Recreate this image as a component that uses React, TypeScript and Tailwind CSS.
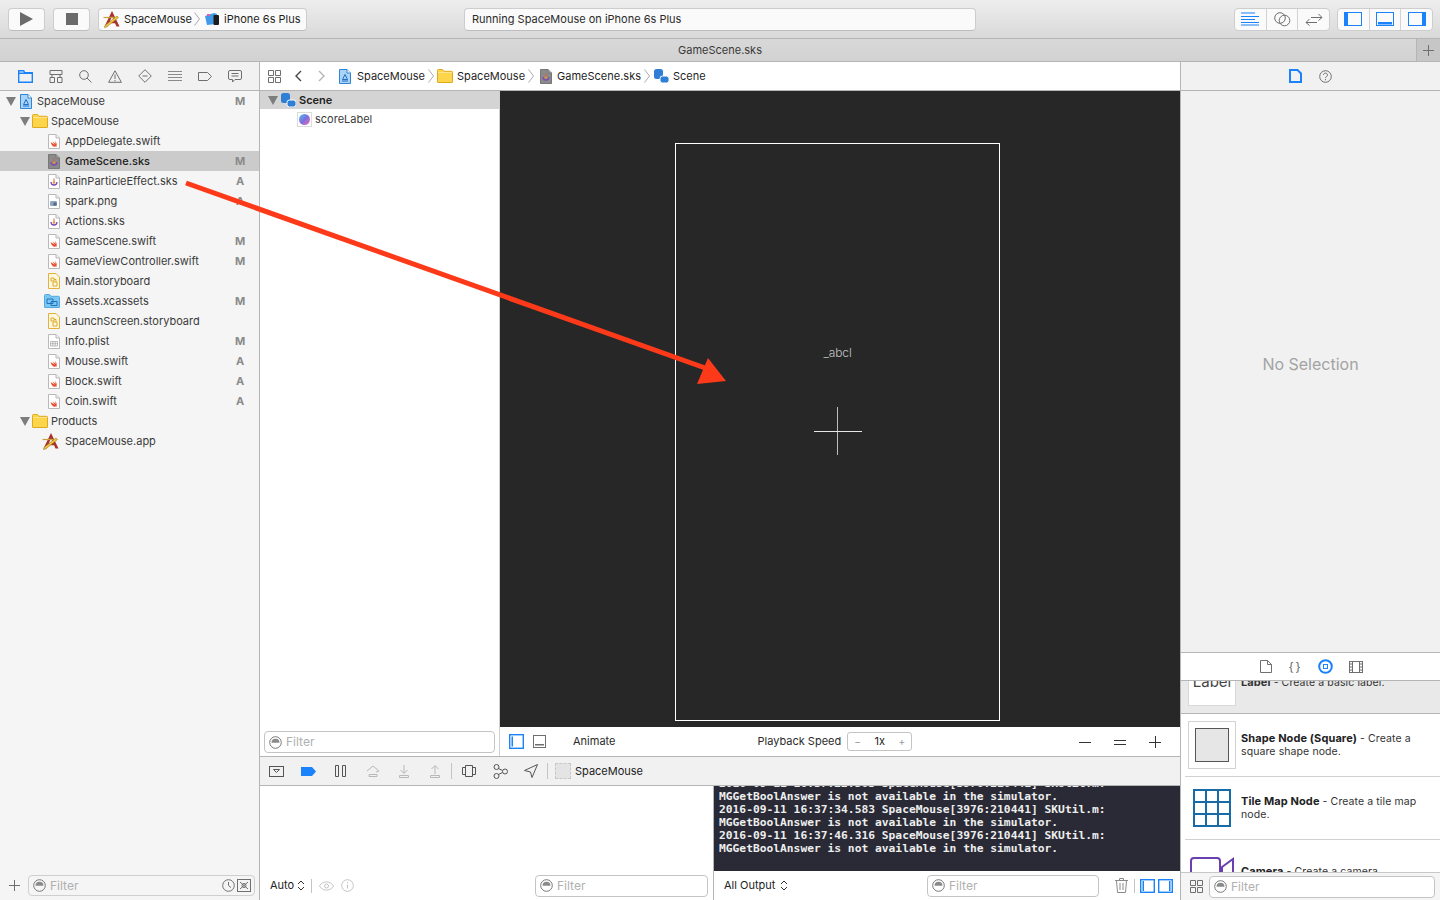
import React from "react";

const BLUE = "#1a82fb";
const GRAY = "#6f6f6f";

// -- small icon drawings --
function Disclosure() {
    return <svg width="10" height="9" viewBox="0 0 10 9" className="shrink-0"><path d="M0 0h10L5 9z" fill="#7d7d7d" /></svg>;
}
function Paper({ children, dark }: { children?: React.ReactNode; dark?: boolean }) {
    return (
        <svg width="12" height="15" viewBox="0 0 12 15" className="shrink-0">
            <path d="M.5.5h7.5l3.500 3.500v10.500h-11z" fill={dark ? "#8a8a8a" : "#fff"} stroke={dark ? "#777" : "#b9b9b9"} />
            <path d="M8 .5v3.500h3.500" fill={dark ? "#aaa" : "#eee"} stroke={dark ? "#777" : "#b9b9b9"} />
            {children}
        </svg>
    );
}
function SwiftFile() {
    return <Paper><path d="M2.500 8c2 1.500 4 2.500 4.500 2.700-1-1-2-2.400-2.500-3.200 1.500 1.200 3 2.200 3.500 2.300-.5-1-1-2-1.200-2.800 1.500 1.200 2.500 3 1.700 4.800.4.500.5.900.5 1.200-.5-.6-1-.6-1.600-.4-1.800.5-4-1-4.900-4.600z" fill="#ea4b2e" /></Paper>;
}
function SksFile({ dark }: { dark?: boolean }) {
    return (
        <Paper dark={dark}>
            <path d="M3 8a3 3 0 0 0 6 0" fill="none" stroke="#7b4cb5" strokeWidth="1.300" />
            <circle cx="6" cy="8.500" r="1.200" fill="#e8902c" />
            <path d="M6 4.500v3" stroke="#d9603c" strokeWidth="1" />
        </Paper>
    );
}
function PngFile() {
    return <Paper><rect x="2" y="7" width="7" height="5" rx="1" fill="#8fa6c4" /><circle cx="7" cy="10" r="1.800" fill="#5d6b80" /></Paper>;
}
function PlistFile() {
    return <Paper><path d="M2.500 7.500h7v4.500h-7zM2.500 9.700h7M4.800 7.500v4.500M7.200 7.500v4.500" fill="none" stroke="#a9a9a9" strokeWidth=".8" /></Paper>;
}
function StoryboardFile() {
    return (
        <svg width="12" height="16" viewBox="0 0 12 16" className="shrink-0">
            <path d="M.5.500h7.500l3.500 3.500v11.500h-11z" fill="#fff8e0" stroke="#e3b23a" />
            <path d="M3 5h3v3h-3zM5 9h4v4h-4z" fill="none" stroke="#e0a92a" />
            <path d="M6 6.500h2v2.500" fill="none" stroke="#e0a92a" />
        </svg>
    );
}
function Folder({ w = 16, h = 14 }: { w?: number; h?: number }) {
    return (
        <svg width={w} height={h} viewBox="0 0 16 14" className="shrink-0">
            <path d="M.5 13V1.500a1 1 0 0 1 1-1h4l1.500 1.800h7.500a1 1 0 0 1 1 1V13a.5.500 0 0 1-.5.500h-14a.5.500 0 0 1-.5-.5z" fill="#fdd54a" stroke="#dfa91f" />
            <path d="M1 3.500h14" stroke="#fbe38f" />
        </svg>
    );
}
function AssetsFolder() {
    return (
        <svg width="16" height="14" viewBox="0 0 16 14" className="shrink-0">
            <path d="M.5 13V1.500a1 1 0 0 1 1-1h4l1.500 1.800h7.500a1 1 0 0 1 1 1V13a.5.500 0 0 1-.5.500h-14a.5.500 0 0 1-.5-.5z" fill="#7cc7f2" stroke="#55a8dc" />
            <path d="M3 5h6v4.500h-6zM7 7.500h6v4h-6z" fill="none" stroke="#1f73bd" />
        </svg>
    );
}
function ProjectFile({ size = 12 }: { size?: number }) {
    return (
        <svg width={size} height={size * 15 / 12} viewBox="0 0 12 15" className="shrink-0">
            <path d="M.5.500h7.500l3.500 3.500v10.500h-11z" fill="#a9d3f7" stroke="#2f86d8" />
            <path d="M8 .5v3.500h3.500" fill="#fff" stroke="#2f86d8" />
            <path d="M6 5.500l2.500 5h-5zM3 12h6" fill="none" stroke="#1f6fc4" />
        </svg>
    );
}
function AppIcon({ size = 18 }: { size?: number }) {
    return (
        <svg width={size} height={size} viewBox="0 0 18 18" className="shrink-0">
            <path d="M9 1l7.500 15.500h-3l-1.400-3.200h-6.200l-1.400 3.200h-3z" fill="#a8322b" />
            <path d="M9 6.500l2 4.500h-4z" fill="#f4f4f4" />
            <path d="M2 15.500l12-9.500 1.500 1.500-12 9.500-2 .5z" fill="#f2c744" stroke="#9b7b1f" strokeWidth=".6" />
            <path d="M.5 7.500h11" stroke="#c9a13a" strokeWidth="1.200" />
        </svg>
    );
}
function PhoneSim() {
    return (
        <svg width="16" height="14" viewBox="0 0 16 14" className="shrink-0">
            <path d="M1 4l9-3 3 1-1 10-9 1z" fill="#3f9be8" />
            <path d="M3 2h3v2h-3z" fill="#d864a8" />
            <rect x="9.500" y="3" width="5.500" height="10" rx="1" fill="#1c1c1c" />
        </svg>
    );
}
function FilterGlyph() {
    return (
        <svg width="13" height="13" viewBox="0 0 13 13" className="shrink-0">
            <circle cx="6.500" cy="6.500" r="5.800" fill="none" stroke="#777" />
            <path d="M2.500 6.800a4 4 0 0 1 8 0z" fill="#8a8a8a" />
        </svg>
    );
}
function FilterBox({ className, right, bg }: { className: string; right?: React.ReactNode; bg?: string }) {
    return (
        <div className={`flex h-[22px] items-center gap-1 rounded-[4px] border border-[#c4c4c4] pl-[4px] pr-[3px] ${bg ?? "bg-white"} ${className}`}>
            <FilterGlyph />
            <span className="flex-1 text-[12px] text-[#b0b0b0]">Filter</span>
            {right}
        </div>
    );
}
function Chevron({ h = 14 }: { h?: number }) {
    return <svg width="6" height={h} viewBox="0 0 6 14" className="shrink-0"><path d="M.5.500l5 6.500-5 6.500" fill="none" stroke="#aaa" /></svg>;
}
function Ico({ w = 16, h = 16, children, className }: { w?: number; h?: number; children: React.ReactNode; className?: string }) {
    return <svg width={w} height={h} viewBox={`0 0 ${w} ${h}`} fill="none" stroke={GRAY} className={`shrink-0 ${className ?? ""}`}>{children}</svg>;
}

// -- toolbar --
function ToolBtn({ children, className }: { children: React.ReactNode; className: string }) {
    return <div className={`flex h-[23px] items-center justify-center rounded-[4px] border border-[#cdcdcd] border-b-[#bdbdbd] bg-[#fafafa] ${className}`}>{children}</div>;
}
function Toolbar() {
    return (
        <div className="flex h-[39px] shrink-0 items-center border-b border-[#b5b5b5] bg-gradient-to-b from-[#eeeeee] to-[#d9d9d9] pl-[8px] pr-[7px]">
            <ToolBtn className="w-[37px]">
                <svg width="13" height="14" viewBox="0 0 13 14"><path d="M0 0l13 7-13 7z" fill="#6b6b6b" /></svg>
            </ToolBtn>
            <ToolBtn className="ml-[8px] w-[37px]"><div className="h-[12px] w-[12px] bg-[#6b6b6b]" /></ToolBtn>
            <ToolBtn className="ml-[8px] w-[209px] justify-start whitespace-nowrap pl-[4px] text-[#1f1f1f]">
                <AppIcon />
                <span className="ml-[3px] pt-px text-[11px]">SpaceMouse</span>
                <span className="ml-[2px]"><Chevron /></span>
                <span className="ml-[4px]"><PhoneSim /></span>
                <span className="ml-[4px] pt-px text-[11px]">iPhone 6s Plus</span>
            </ToolBtn>
            <ToolBtn className="ml-[157px] w-[512px] justify-start pl-[7px]">
                <span className="pt-px text-[11px] text-[#2b2b2b]">Running SpaceMouse on iPhone 6s Plus</span>
            </ToolBtn>
            <div className="ml-auto flex h-[23px] w-[96px] divide-x divide-[#d2d2d2] rounded-[4px] border border-[#cdcdcd] bg-[#fafafa]">
                <div className="flex flex-1 items-center justify-center">
                    <Ico w={18} h={14}><path d="M0 1h14M0 4.500h18M0 7.500h14M0 10.500h18M0 13h18" stroke={BLUE} /></Ico>
                </div>
                <div className="flex flex-1 items-center justify-center">
                    <Ico w={17} h={15}><circle cx="6" cy="6" r="5.300" /><circle cx="10.500" cy="8.500" r="5.300" /></Ico>
                </div>
                <div className="flex flex-1 items-center justify-center">
                    <Ico w={18} h={13}><path d="M6 4.500h11M13.500 1l3.500 3.500-3.500 3M1 9.500h11M4.500 6l-3.500 3.500 3.500 3" /></Ico>
                </div>
            </div>
            <div className="ml-[7px] flex h-[23px] w-[96px] divide-x divide-[#d2d2d2] rounded-[4px] border border-[#cdcdcd] bg-[#fafafa]">
                <div className="flex flex-1 items-center justify-center">
                    <Ico w={18} h={14}><rect x=".5" y=".5" width="17" height="13" stroke={BLUE} /><rect x="1" y="1" width="3" height="12" fill={BLUE} stroke="none" /></Ico>
                </div>
                <div className="flex flex-1 items-center justify-center">
                    <Ico w={18} h={14}><rect x=".5" y=".5" width="17" height="13" stroke={BLUE} /><rect x="2" y="10" width="14" height="2.500" fill={BLUE} stroke="none" /></Ico>
                </div>
                <div className="flex flex-1 items-center justify-center">
                    <Ico w={18} h={14}><rect x=".5" y=".5" width="17" height="13" stroke={BLUE} /><rect x="14" y="1" width="3" height="12" fill={BLUE} stroke="none" /></Ico>
                </div>
            </div>
        </div>
    );
}
function TabBar() {
    return (
        <div className="flex h-[23px] shrink-0 items-center border-b border-[#b5b5b5] bg-gradient-to-b from-[#d8d8d8] to-[#d2d2d2]">
            <div className="flex-1 pl-[24px] pt-px text-center text-[11px] text-[#3a3a3a]">GameScene.sks</div>
            <div className="flex h-full w-[24px] items-center justify-center border-l border-[#b5b5b5] bg-[#c6c6c6]">
                <Ico w={11} h={11}><path d="M5.500 0v11M0 5.500h11" /></Ico>
            </div>
        </div>
    );
}

// -- navigator --
type TRow = { name: string; icon: React.ReactNode; status?: string; level: number; open?: boolean; selected?: boolean };
const rows: TRow[] = [
    { name: "SpaceMouse", icon: <ProjectFile />, status: "M", level: 0, open: true },
    { name: "SpaceMouse", icon: <Folder />, level: 1, open: true },
    { name: "AppDelegate.swift", icon: <SwiftFile />, level: 2 },
    { name: "GameScene.sks", icon: <SksFile dark />, status: "M", level: 2, selected: true },
    { name: "RainParticleEffect.sks", icon: <SksFile />, status: "A", level: 2 },
    { name: "spark.png", icon: <PngFile />, status: "A", level: 2 },
    { name: "Actions.sks", icon: <SksFile />, level: 2 },
    { name: "GameScene.swift", icon: <SwiftFile />, status: "M", level: 2 },
    { name: "GameViewController.swift", icon: <SwiftFile />, status: "M", level: 2 },
    { name: "Main.storyboard", icon: <StoryboardFile />, level: 2 },
    { name: "Assets.xcassets", icon: <AssetsFolder />, status: "M", level: 2 },
    { name: "LaunchScreen.storyboard", icon: <StoryboardFile />, level: 2 },
    { name: "Info.plist", icon: <PlistFile />, status: "M", level: 2 },
    { name: "Mouse.swift", icon: <SwiftFile />, status: "A", level: 2 },
    { name: "Block.swift", icon: <SwiftFile />, status: "A", level: 2 },
    { name: "Coin.swift", icon: <SwiftFile />, status: "A", level: 2 },
    { name: "Products", icon: <Folder />, level: 1, open: true },
    { name: "SpaceMouse.app", icon: <AppIcon />, level: 2 },
];

function NavRow({ row }: { row: TRow }) {
    return (
        <div className={`flex h-[20px] items-center pr-[14px] ${row.selected ? "bg-[#cbcbcb]" : ""}`}>
            {row.level === 0 && <div className="flex w-[37px] items-center gap-[4px] pl-[6px]"><Disclosure />{row.icon}</div>}
            {row.level === 1 && <div className="flex w-[51px] items-center gap-[2px] pl-[20px]"><Disclosure />{row.icon}</div>}
            {row.level === 2 && <div className="flex w-[65px] items-center justify-end pr-[5px]">{row.icon}</div>}
            <span className={`flex-1 pt-px text-[11px] ${row.selected ? "font-medium text-[#1c1c1c]" : "text-[#3b3b3b]"}`}>{row.name}</span>
            {row.status && <span className="w-[10px] text-center text-[11px] font-bold text-[#8a8a8a]">{row.status}</span>}
        </div>
    );
}
function Navigator() {
    return (
        <aside className="flex w-[260px] shrink-0 flex-col border-r border-[#b5b5b5] bg-[#f5f5f5]">
            <div className="flex h-[29px] shrink-0 items-center justify-between border-b border-[#b5b5b5] bg-[#f1f1f1] pl-[18px] pr-[17px]">
                <Ico w={15} h={13}><path d="M.7.700h5l1 2h7.600v9.600h-13.600zM.7 3.300h13.600" stroke={BLUE} strokeWidth="1.400" /></Ico>
                <Ico w={14} h={13}><path d="M1 .5h12v4h-12zM3 4.500v3M11 4.500v3M1 7.500h4.500v5h-4.500zM8.500 7.500h4.500v5h-4.500z" /></Ico>
                <Ico w={13} h={13}><circle cx="5" cy="5" r="4.300" /><path d="M8 8l4.500 4.500" /></Ico>
                <Ico w={14} h={13}><path d="M7 .8l6.400 11.500h-12.800zM7 4.500v4.500M7 10v1.200" /></Ico>
                <Ico w={14} h={14}><path d="M7 .7l6.300 6.300-6.300 6.300-6.300-6.300zM4.500 7h5" /></Ico>
                <Ico w={14} h={10}><path d="M0 .5h14M0 3.500h14M0 6.500h14M0 9.500h14" stroke="#8a8a8a" /></Ico>
                <Ico w={14} h={9}><path d="M.5.500h9l4 4-4 4h-9z" /></Ico>
                <Ico w={14} h={13}><path d="M2 .5h10a1.500 1.500 0 0 1 1.500 1.500v6a1.500 1.500 0 0 1-1.500 1.500h-5l-2.500 2.500v-2.500h-2.500a1.500 1.500 0 0 1-1.500-1.500v-6a1.500 1.500 0 0 1 1.500-1.500zM3.500 3.500h7M3.500 6h7" /></Ico>
            </div>
            <div className="flex-1">
                {rows.map((r, i) => <NavRow key={i} row={r} />)}
            </div>
            <div className="flex h-[29px] shrink-0 items-center pl-[9px] pr-[4px]">
                <Ico w={11} h={11} className="mr-[8px]"><path d="M5.500 0v11M0 5.500h11" /></Ico>
                <FilterBox
                    className="flex-1 !h-[21px] !border-[#cfcfcf]"
                    bg="bg-[#f5f5f5]"
                    right={
                        <span className="flex items-center gap-[2px]">
                            <Ico w={13} h={13}><circle cx="6.500" cy="6.500" r="5.800" /><path d="M6.500 3v3.500l2.500 2" /></Ico>
                            <Ico w={14} h={13}><rect x=".5" y=".5" width="13" height="12" /><path d="M3 3l8 7M11 3l-8 7" /><circle cx="7" cy="6.500" r="2" /></Ico>
                        </span>
                    }
                />
            </div>
        </aside>
    );
}

// -- center --
function SceneGlyph() {
    return (
        <svg width="15" height="14" viewBox="0 0 15 14" className="shrink-0">
            <rect x="0" y="0" width="9" height="10" rx="2.500" fill="#2f7fd6" />
            <rect x="6" y="7" width="9" height="7" rx="2.500" fill="#2f7fd6" stroke="#fff" />
        </svg>
    );
}
function Breadcrumbs() {
    return (
        <div className="flex h-[29px] shrink-0 items-center border-b border-[#b5b5b5] bg-white pl-[8px] text-[11px] text-[#1f1f1f]">
            <Ico w={13} h={13}><path d="M.5.500h5v5h-5zM7.500.5h5v5h-5zM.5 7.500h5v5h-5zM7.500 7.500h5v5h-5z" /></Ico>
            <svg width="7" height="12" viewBox="0 0 7 12" className="ml-[14px]"><path d="M6 1l-5 5 5 5" fill="none" stroke="#444" strokeWidth="1.400" /></svg>
            <svg width="7" height="12" viewBox="0 0 7 12" className="ml-[16px]"><path d="M1 1l5 5-5 5" fill="none" stroke="#b5b5b5" strokeWidth="1.400" /></svg>
            <span className="ml-[14px]"><ProjectFile /></span>
            <span className="ml-[6px] pt-px">SpaceMouse</span>
            <span className="ml-[3px]"><Chevron /></span>
            <span className="ml-[3px]"><Folder /></span>
            <span className="ml-[4px] pt-px">SpaceMouse</span>
            <span className="ml-[3px]"><Chevron /></span>
            <span className="ml-[6px]"><SksFile dark /></span>
            <span className="ml-[5px] pt-px">GameScene.sks</span>
            <span className="ml-[3px]"><Chevron /></span>
            <span className="ml-[4px]"><SceneGlyph /></span>
            <span className="ml-[4px] pt-px">Scene</span>
        </div>
    );
}
function SceneEditor() {
    return (
        <div className="flex min-h-0 flex-1">
            <div className="flex w-[240px] shrink-0 flex-col border-r border-[#d0d0d0] bg-white">
                <div className="flex h-[18px] items-center gap-[3px] bg-[#d4d4d4] pl-[8px]">
                    <Disclosure />
                    <SceneGlyph />
                    <span className="pt-px text-[11px] font-semibold text-[#222]">Scene</span>
                </div>
                <div className="flex h-[20px] items-center pl-[37px] pt-[1px]">
                    <span className="flex h-[15px] w-[15px] items-center justify-center border border-[#dcdcdc]">
                        <span className="h-[11px] w-[11px] rounded-full bg-gradient-to-br from-[#35c1e8] via-[#7a6ee0] to-[#ea5fb0]" />
                    </span>
                    <span className="ml-[3px] text-[11px] text-[#3b3b3b]">scoreLabel</span>
                </div>
                <div className="flex-1" />
                <div className="flex h-[28px] items-start px-[4px] pt-[3px]">
                    <FilterBox className="flex-1" />
                </div>
            </div>
            <div className="flex min-w-0 flex-1 flex-col">
                <div className="flex flex-1 flex-col bg-[#272727] pl-[175px] pt-[52px]">
                    <div className="flex h-[578px] w-[325px] flex-col items-center border border-white">
                        <div className="mt-[202px] flex h-[14px] items-center text-[12px] font-light tracking-[-0.1px] text-[#c4c4c4]">
                            <span>_abcl</span>
                        </div>
                        <div className="relative mt-[47px] h-[48px] w-[48px]">
                            <div className="absolute left-[23.5px] top-0 h-[48px] w-[1px] bg-[#bdbdbd]" />
                            <div className="absolute left-0 top-[23.5px] h-[1px] w-[48px] bg-[#e6e6e6]" />
                        </div>
                    </div>
                    <div className="flex-1" />
                </div>
                <div className="flex h-[29px] shrink-0 items-center bg-white pl-[9px] pr-[19px] text-[11px] text-[#2b2b2b]">
                    <Ico w={15} h={15}><rect x=".7" y=".7" width="13.600" height="13.600" stroke={BLUE} strokeWidth="1.400" /><rect x="2.500" y="2.500" width="1.500" height="10" fill={BLUE} stroke="none" /></Ico>
                    <Ico w={13} h={13} className="ml-[9px]"><rect x=".5" y=".5" width="12" height="12" /><rect x="2" y="9" width="9" height="1.500" fill={GRAY} stroke="none" /></Ico>
                    <span className="ml-[27px]">Animate</span>
                    <span className="ml-[142px]">Playback Speed</span>
                    <div className="ml-[6px] flex h-[19px] w-[65px] items-center justify-between rounded-[3px] border border-[#c4c4c4] px-[6px]">
                        <span className="text-[10px] text-[#999]">−</span>
                        <span className="text-[11px] text-[#222]">1x</span>
                        <span className="text-[10px] text-[#999]">+</span>
                    </div>
                    <div className="ml-auto flex items-center gap-[23px]">
                        <svg width="12" height="12" viewBox="0 0 12 12"><path d="M0 6.500h12" stroke="#333" /></svg>
                        <svg width="12" height="12" viewBox="0 0 12 12"><path d="M0 4.500h12M0 8.500h12" stroke="#333" /></svg>
                        <svg width="12" height="12" viewBox="0 0 12 12"><path d="M0 6.500h12M6.500 0v12" stroke="#333" /></svg>
                    </div>
                </div>
            </div>
        </div>
    );
}
function DebugBar() {
    return (
        <div className="flex h-[30px] shrink-0 items-center border-y border-[#b5b5b5] bg-[#f1f1f1] pl-[9px] text-[11px] text-[#222]">
            <Ico w={15} h={11}><rect x=".5" y=".5" width="14" height="10" stroke="#555" /><path d="M4.500 3.500h6l-3 3z" stroke="#555" /></Ico>
            <svg width="15" height="9" viewBox="0 0 15 9" className="ml-[17px]"><path d="M0 0h11l4 4.500-4 4.500h-11z" fill={BLUE} /></svg>
            <Ico w={11} h={12} className="ml-[19px]"><path d="M.5.500h3v11h-3zM7.500.5h3v11h-3z" stroke="#555" /></Ico>
            <Ico w={14} h={12} className="ml-[20px]"><path d="M1 6l6-5 6 5-3 1M3 9.500h8v2h-8z" stroke="#b8b8b8" /></Ico>
            <Ico w={10} h={13} className="ml-[19px]"><path d="M5 0v8M1.500 5l3.500 3.500 3.500-3.500M.5 10.500h9v2h-9z" stroke="#b8b8b8" /></Ico>
            <Ico w={10} h={13} className="ml-[21px]"><path d="M5 9V1M1.500 4l3.500-3.500 3.500 3.500M.5 10.500h9v2h-9z" stroke="#b8b8b8" /></Ico>
            <div className="ml-[11px] h-[16px] w-[1px] bg-[#c4c4c4]" />
            <Ico w={14} h={12} className="ml-[10px]"><path d="M3.500.5h7v11h-7zM3.500 2.500h-3v7h3M10.500 2.500h3v7h-3" stroke="#555" /></Ico>
            <Ico w={15} h={15} className="ml-[17px]"><circle cx="3.500" cy="3" r="2.500" stroke="#555" /><circle cx="3.500" cy="12" r="2.500" stroke="#555" /><circle cx="12" cy="7.500" r="2.500" stroke="#555" /><path d="M5.500 4.500l4 2M5.500 10.500l4-2" stroke="#555" /></Ico>
            <Ico w={14} h={14} className="ml-[16px]"><path d="M13.500.5l-13 6 6 1.500 1.500 5.500z" stroke="#555" /></Ico>
            <div className="ml-[9px] h-[16px] w-[1px] bg-[#c4c4c4]" />
            <div className="ml-[7px] h-[16px] w-[16px] border border-dashed border-[#c8c8c8] bg-[#e4e4e4]" />
            <span className="ml-[4px]">SpaceMouse</span>
        </div>
    );
}
function Stepper() {
    return <svg width="8" height="11" viewBox="0 0 8 11" className="ml-[3px]"><path d="M1 4l3-3 3 3M1 7l3 3 3-3" fill="none" stroke="#333" /></svg>;
}
function ConsoleArea() {
    return (
        <div className="flex h-[114px] shrink-0">
            <div className="flex w-[454px] shrink-0 flex-col border-r border-[#b5b5b5] bg-white">
                <div className="flex-1" />
                <div className="flex h-[29px] shrink-0 items-center pl-[10px] pr-[5px] text-[11px] text-[#222]">
                    <span>Auto</span>
                    <Stepper />
                    <div className="ml-[6px] h-[14px] w-[1px] bg-[#c4c4c4]" />
                    <Ico w={15} h={10} className="ml-[7px]"><path d="M.5 5c3-5.500 11-5.500 14 0-3 5.500-11 5.500-14 0z" stroke="#c4c4c4" /><circle cx="7.500" cy="5" r="2" stroke="#c4c4c4" /></Ico>
                    <Ico w={13} h={13} className="ml-[7px]"><circle cx="6.500" cy="6.500" r="5.800" stroke="#c4c4c4" /><path d="M6.500 5.500v4M6.500 3v1.200" stroke="#c4c4c4" /></Ico>
                    <FilterBox className="ml-auto w-[173px]" />
                </div>
            </div>
            <div className="flex min-w-0 flex-1 flex-col">
                <div className="h-[85px] shrink-0 overflow-hidden bg-[#292a35] pl-[5px] [font-family:'DejaVu_Sans_Mono',monospace] text-[11.27px] font-bold leading-[13px] text-[#eeeeee]">
                    <div className="-mt-[9px] whitespace-pre">{"2016-09-11 16:37:22.503 SpaceMouse[3976:210441] SKUtil.m:"}</div>
                    <div className="whitespace-pre">MGGetBoolAnswer is not available in the simulator.</div>
                    <div className="whitespace-pre">2016-09-11 16:37:34.583 SpaceMouse[3976:210441] SKUtil.m:</div>
                    <div className="whitespace-pre">MGGetBoolAnswer is not available in the simulator.</div>
                    <div className="whitespace-pre">2016-09-11 16:37:46.316 SpaceMouse[3976:210441] SKUtil.m:</div>
                    <div className="whitespace-pre">MGGetBoolAnswer is not available in the simulator.</div>
                </div>
                <div className="flex flex-1 items-center bg-white pl-[10px] pr-[6px] text-[11px] text-[#222]">
                    <span className="w-[53px]">All Output</span>
                    <Stepper />
                    <FilterBox className="ml-[139px] w-[172px]" />
                    <Ico w={13} h={15} className="ml-[16px]"><path d="M0 2.500h13M4.500 2.500v-2h4v2M1.500 2.500l1 12h8l1-12M5 5v7M8 5v7" stroke="#8a8a8a" /></Ico>
                    <div className="ml-[6px] h-[14px] w-[1px] bg-[#c4c4c4]" />
                    <Ico w={15} h={14} className="ml-[5px]"><rect x=".7" y=".7" width="13.600" height="12.600" stroke={BLUE} strokeWidth="1.400" /><rect x="2.500" y="2" width="1.500" height="10" fill={BLUE} stroke="none" /></Ico>
                    <Ico w={15} h={14} className="ml-[3px]"><rect x=".7" y=".7" width="13.600" height="12.600" stroke={BLUE} strokeWidth="1.400" /><rect x="11" y="2" width="1.500" height="10" fill={BLUE} stroke="none" /></Ico>
                </div>
            </div>
        </div>
    );
}

// -- right panel --
function LibraryItem({ thumb, title, desc }: { thumb: React.ReactNode; title: string; desc: React.ReactNode }) {
    return (
        <div className="ml-[4px] flex h-[63px] shrink-0 items-center border-b border-[#d2d2d2] pl-[3px] text-[10.5px] leading-[13px] tracking-[0.1px] text-[#333]">
            {thumb}
            <div className="ml-[5px] w-[180px]"><span className="text-[11px] font-bold tracking-[0.1px] text-[#222]">{title}</span> - {desc}</div>
        </div>
    );
}
function TabCell({ children }: { children: React.ReactNode }) {
    return <div className="flex w-[30px] items-center justify-center">{children}</div>;
}
function Inspector() {
    return (
        <aside className="flex w-[260px] shrink-0 flex-col border-l border-[#b5b5b5] bg-[#f1f1f1]">
            <div className="flex h-[29px] shrink-0 items-center justify-center border-b border-[#b5b5b5]">
                <TabCell><svg width="13" height="14" viewBox="0 0 13 14"><path d="M1 1h7.500l3.500 3.500v8.500h-11z" fill="none" stroke={BLUE} strokeWidth="2" /></svg></TabCell>
                <TabCell><Ico w={13} h={13}><circle cx="6.500" cy="6.500" r="5.800" /><path d="M4.500 5c0-2.500 4-2.500 4 0 0 1.500-2 1.500-2 3M6.500 9v1.200" /></Ico></TabCell>
            </div>
            <div className="flex min-h-0 flex-1 items-center justify-center pb-[16px]">
                <span className="text-[16px] text-[#a3a3a3]">No Selection</span>
            </div>
            <div className="flex h-[29px] shrink-0 items-center justify-center border-y border-[#b5b5b5] bg-white">
                <TabCell><Ico w={12} h={13}><path d="M.5.500h7l4 4v8h-11zM7.500.5v4h4" /></Ico></TabCell>
                <TabCell><span className="text-[12px] leading-none tracking-[2px] text-[#666]">{"{}"}</span></TabCell>
                <TabCell><svg width="15" height="15" viewBox="0 0 15 15"><circle cx="7.500" cy="7.500" r="6.300" fill="none" stroke={BLUE} strokeWidth="2" /><rect x="5.500" y="5.500" width="4" height="4" fill="none" stroke={BLUE} /></svg></TabCell>
                <TabCell><Ico w={14} h={12}><rect x=".5" y=".5" width="13" height="11" /><path d="M3.500.5v11M10.500.5v11M.5 3h3M.5 6h3M.5 9h3M10.500 3h3M10.500 6h3M10.500 9h3" /></Ico></TabCell>
            </div>
            <div className="flex h-[191px] shrink-0 flex-col overflow-hidden bg-white">
                <div className="flex h-[33px] shrink-0 items-start overflow-hidden border-b border-[#b5b5b5] bg-[#e9e9e9] pl-[7px]">
                    <div className="flex h-[25px] w-[48px] shrink-0 items-start justify-center overflow-hidden border border-t-0 border-[#d8d8d8] bg-white">
                        <span className="-mt-[9px] text-[15px] leading-[20px] text-[#444]">Label</span>
                    </div>
                    <div className="-mt-[5px] ml-[5px] whitespace-nowrap text-[10.5px] leading-[13px] tracking-[0.1px] text-[#333]"><span className="text-[11px] font-bold">Label</span> - Create a basic label.</div>
                </div>
                <LibraryItem
                    title="Shape Node (Square)"
                    desc={<>Create a square shape node.</>}
                    thumb={
                        <div className="flex h-[48px] w-[48px] shrink-0 items-center justify-center border border-[#d2d2d2] bg-white">
                            <div className="h-[34px] w-[34px] border border-[#555] bg-[#e6e6e6]" />
                        </div>
                    }
                />
                <LibraryItem
                    title="Tile Map Node"
                    desc={<>Create a tile map node.</>}
                    thumb={
                        <div className="flex h-[48px] w-[48px] shrink-0 items-center justify-center">
                            <svg width="38" height="38" viewBox="0 0 38 38"><path d="M1 1h36v36h-36zM13 1v36M25 1v36M1 13h36M1 25h36" fill="none" stroke="#176ca8" strokeWidth="2" /></svg>
                        </div>
                    }
                />
                <LibraryItem
                    title="Camera"
                    desc={<>Create a camera</>}
                    thumb={
                        <div className="flex h-[48px] w-[48px] shrink-0 items-center justify-center">
                            <svg width="44" height="28" viewBox="0 0 44 28"><rect x="1" y="1" width="29" height="26" rx="3" fill="none" stroke="#6a3fb0" strokeWidth="2" /><path d="M32 10l11-8v24l-11-8z" fill="none" stroke="#6a3fb0" strokeWidth="2" /></svg>
                        </div>
                    }
                />
            </div>
            <div className="flex h-[28px] shrink-0 items-center border-t border-[#c8c8c8] bg-[#f5f5f5] pl-[9px] pr-[5px]">
                <Ico w={13} h={13}><path d="M.5.500h5v5h-5zM7.500.5h5v5h-5zM.5 7.500h5v5h-5zM7.500 7.500h5v5h-5z" /></Ico>
                <FilterBox className="ml-[6px] flex-1" />
            </div>
        </aside>
    );
}

export default function App() {
    return (
        <div className="relative flex h-[900px] w-[1440px] flex-col overflow-hidden bg-white [font-family:Inter,'Noto_Sans',sans-serif]">
            <Toolbar />
            <TabBar />
            <div className="flex min-h-0 flex-1">
                <Navigator />
                <main className="flex min-w-0 flex-1 flex-col">
                    <Breadcrumbs />
                    <SceneEditor />
                    <DebugBar />
                    <ConsoleArea />
                </main>
                <Inspector />
            </div>
            {/* annotation drawn over the window */}
            <svg width="1440" height="900" viewBox="0 0 1440 900" className="pointer-events-none absolute left-0 top-0">
                <path d="M186 183L708 369" stroke="#fc3a1a" strokeWidth="5" />
                <path d="M726 381L697 384L708 358z" fill="#fc3a1a" />
            </svg>
        </div>
    );
}
